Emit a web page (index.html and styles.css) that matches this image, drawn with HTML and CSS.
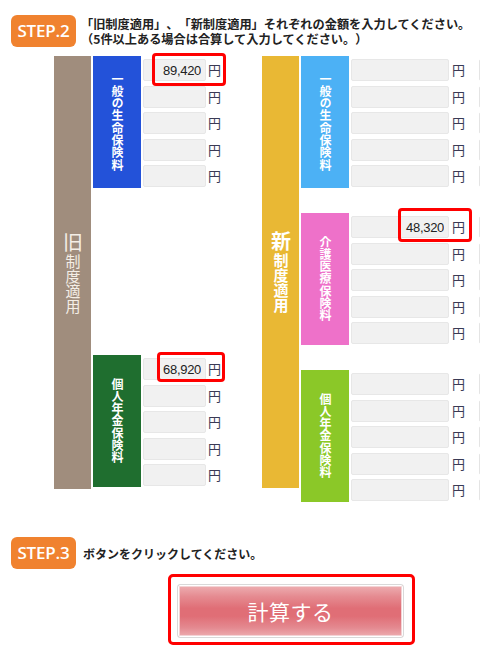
FILE: index.html
```html
<!DOCTYPE html>
<html lang="ja">
<head>
<meta charset="utf-8">
<title>STEP</title>
<link rel="stylesheet" href="styles.css">
</head>
<body>
<div class="step step2">
  <div class="badge">STEP.2</div>
  <p class="lead">「旧制度適用」、「新制度適用」それぞれの金額を入力してください。<br>（5件以上ある場合は合算して入力してください。）</p>
</div>

<div class="tables">
  <div class="table old">
    <div class="cat cat-old"><span class="cat-text"><span class="big">旧</span>制度適用</span></div>
    <div class="groups spread">
      <div class="group">
        <div class="label lbl-blue"><span class="vtext">一般の生命保険料</span></div>
        <div class="rows">
          <div class="row"><input class="field" type="text" value="89,420" readonly><span class="yen">円</span><span class="mark mark1"></span></div>
          <div class="row"><input class="field" type="text" readonly><span class="yen">円</span></div>
          <div class="row"><input class="field" type="text" readonly><span class="yen">円</span></div>
          <div class="row"><input class="field" type="text" readonly><span class="yen">円</span></div>
          <div class="row"><input class="field" type="text" readonly><span class="yen">円</span></div>
        </div>
      </div>
      <div class="group">
        <div class="label lbl-green"><span class="vtext">個人年金保険料</span></div>
        <div class="rows">
          <div class="row"><input class="field" type="text" value="68,920" readonly><span class="yen">円</span><span class="mark mark2"></span></div>
          <div class="row"><input class="field" type="text" readonly><span class="yen">円</span></div>
          <div class="row"><input class="field" type="text" readonly><span class="yen">円</span></div>
          <div class="row"><input class="field" type="text" readonly><span class="yen">円</span></div>
          <div class="row"><input class="field" type="text" readonly><span class="yen">円</span></div>
        </div>
      </div>
    </div>
  </div>

  <div class="table new">
    <div class="cat cat-new"><span class="cat-text"><span class="big">新</span>制度適用</span></div>
    <div class="groups stack">
      <div class="group">
        <div class="label lbl-sky"><span class="vtext">一般の生命保険料</span></div>
        <div class="rows">
          <div class="row"><input class="field" type="text" readonly><span class="yen">円</span><span class="next"></span></div>
          <div class="row"><input class="field" type="text" readonly><span class="yen">円</span><span class="next"></span></div>
          <div class="row"><input class="field" type="text" readonly><span class="yen">円</span><span class="next"></span></div>
          <div class="row"><input class="field" type="text" readonly><span class="yen">円</span><span class="next"></span></div>
          <div class="row"><input class="field" type="text" readonly><span class="yen">円</span><span class="next"></span></div>
        </div>
      </div>
      <div class="group">
        <div class="label lbl-pink"><span class="vtext">介護医療保険料</span></div>
        <div class="rows">
          <div class="row"><input class="field" type="text" value="48,320" readonly><span class="yen">円</span><span class="next"></span><span class="mark mark3"></span></div>
          <div class="row"><input class="field" type="text" readonly><span class="yen">円</span><span class="next"></span></div>
          <div class="row"><input class="field" type="text" readonly><span class="yen">円</span><span class="next"></span></div>
          <div class="row"><input class="field" type="text" readonly><span class="yen">円</span><span class="next"></span></div>
          <div class="row"><input class="field" type="text" readonly><span class="yen">円</span><span class="next"></span></div>
        </div>
      </div>
      <div class="group">
        <div class="label lbl-lime"><span class="vtext">個人年金保険料</span></div>
        <div class="rows">
          <div class="row"><input class="field" type="text" readonly><span class="yen">円</span><span class="next"></span></div>
          <div class="row"><input class="field" type="text" readonly><span class="yen">円</span><span class="next"></span></div>
          <div class="row"><input class="field" type="text" readonly><span class="yen">円</span><span class="next"></span></div>
          <div class="row"><input class="field" type="text" readonly><span class="yen">円</span><span class="next"></span></div>
          <div class="row"><input class="field" type="text" readonly><span class="yen">円</span><span class="next"></span></div>
        </div>
      </div>
    </div>
  </div>
</div>

<div class="step step3">
  <div class="badge">STEP.3</div>
  <p class="lead small">ボタンをクリックしてください。</p>
</div>

<div class="btn-wrap">
  <button class="calc" type="button">計算する</button>
</div>
</body>
</html>
```

FILE: styles.css
```css
html, body {
  margin: 0;
  padding: 0;
  overflow: hidden;
  background: #fff;
}
body {
  width: 480px;
  height: 648px;
  font-family: "Noto Sans CJK JP", "Noto Sans", sans-serif;
  color: #222;
  text-spacing-trim: space-all;
}

.step {
  display: flex;
  align-items: center;
  padding-left: 11px;
}
.step2 { padding-top: 15px; }
.step3 { margin-top: 35px; }

.badge {
  width: 65px;
  height: 32px;
  box-sizing: border-box;
  border-radius: 6px;
  background: #f0822f;
  color: #fff;
  font-family: "Open Sans", "Liberation Sans", sans-serif;
  font-weight: 600;
  font-size: 17px;
  line-height: 32px;
  text-align: center;
  letter-spacing: -0.2px;
  flex: 0 0 auto;
}

.lead {
  margin: 0 0 0 5px;
  padding-top: 1px;
  font-size: 12.2px;
  line-height: 15px;
  font-weight: 700;
  color: #222;
  white-space: nowrap;
  text-spacing-trim: space-all;
}
.lead.small {
  font-size: 12px;
  margin-left: 7px;
  padding-top: 0;
}

.tables {
  display: flex;
  align-items: flex-start;
  margin-top: 9px;
  padding-left: 54px;
}
.table {
  display: flex;
  align-items: flex-start;
}
.table.old { flex: 0 0 208px; }

.cat {
  width: 37px;
  display: flex;
  align-items: center;
  justify-content: center;
  margin-right: 2px;
  flex: 0 0 auto;
}
.cat-old { height: 433px; background: #a08d7d; color: #f4eee6; }
.cat-new { height: 432px; background: #e9b834; color: #fff; font-weight: 700; }
.cat-text {
  writing-mode: vertical-rl;
  text-orientation: upright;
  font-size: 15px;
  line-height: 1;
}
.cat-text .big {
  font-size: 20px;
  margin-bottom: 2px;
}

.groups {
  display: flex;
  flex-direction: column;
}
.groups.spread {
  height: 431px;
  justify-content: space-between;
}
.groups.stack { gap: 25px; }

.group {
  display: flex;
  height: 132px;
}
.label {
  width: 48px;
  display: flex;
  align-items: center;
  justify-content: center;
  color: #fff;
  flex: 0 0 auto;
}
.lbl-blue { background: #2352d9; }
.lbl-green { background: #1f6e2f; }
.lbl-sky { background: #4cb1f5; }
.lbl-pink { background: #ee71c9; }
.lbl-lime { background: #8bc828; }
.vtext {
  writing-mode: vertical-rl;
  text-orientation: upright;
  font-size: 12px;
  font-weight: 700;
  line-height: 1;
  letter-spacing: 0.3px;
}

.rows {
  display: flex;
  flex-direction: column;
  gap: 4.5px;
  padding-top: 3px;
  margin-left: 2px;
}
.row {
  position: relative;
  display: flex;
  align-items: center;
  height: 22px;
}
.field {
  box-sizing: border-box;
  height: 22px;
  width: 63px;
  margin: 0;
  padding: 0 4px 0 2px;
  border: 1px solid #e7e7e7;
  border-radius: 2px;
  background: #f1f1f1;
  font-family: "Liberation Sans", Arial, sans-serif;
  font-size: 13px;
  letter-spacing: -0.3px;
  color: #222;
  text-align: right;
  outline: none;
}
.new .field { width: 98px; }
.yen {
  margin-left: 2px;
  font-size: 13px;
  line-height: 22px;
  color: #3a3a55;
}
.new .yen { margin-left: 3px; }
.next {
  box-sizing: border-box;
  width: 40px;
  height: 22px;
  margin-left: 14px;
  border: 1px solid #e4e4e4;
  border-radius: 2px;
  background: #f6f6f6;
  flex: 0 0 auto;
}

.mark {
  position: absolute;
  box-sizing: border-box;
  border: 3px solid #f00;
  border-radius: 4px;
  pointer-events: none;
}
.mark1 { left: 9px; top: -6px; width: 74px; height: 33px; }
.mark2 { left: 14px; top: -6px; width: 68px; height: 30px; }
.mark3 { left: 47px; top: -8px; width: 74px; height: 34px; }

.btn-wrap {
  width: 247px;
  height: 71px;
  box-sizing: border-box;
  margin: 5px 0 0 168px;
  padding: 7px 8px 4px 6px;
  border: 3px solid #f00;
  border-radius: 5px;
}
.calc {
  display: block;
  width: 227px;
  height: 54px;
  margin: 0;
  padding: 0;
  border: 1px solid #d9d9d9;
  border-radius: 3px;
  box-shadow: inset 0 0 0 1px #fff, inset 0 0 0 2px #f3d3d5;
  background: linear-gradient(to bottom, #eeb1b4 0%, #e58b91 22%, #e06e76 45%, #e06e76 60%, #e48990 82%, #eeafb2 100%);
  color: #fff;
  font-family: "Noto Sans CJK JP", sans-serif;
  font-size: 21px;
  font-weight: 400;
  letter-spacing: 0.5px;
  cursor: pointer;
}
```
